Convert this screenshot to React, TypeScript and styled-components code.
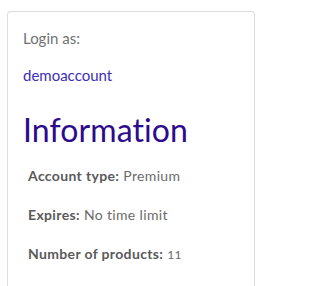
import styled, { createGlobalStyle } from "styled-components";

const GlobalStyle = createGlobalStyle`
  html, body {
    margin: 0;
    height: 100%;
    overflow: hidden;
    background: #fff;
    font-family: "Lato", "Open Sans", Arial, sans-serif;
  }
`;

const Page = styled.div`
  padding: 11px 0 0 7px;
  height: 100vh;
  box-sizing: border-box;
`;

const Card = styled.section`
  width: 248px;
  height: 100%;
  border: 1px solid #dcdcdc;
  border-bottom: none;
  border-radius: 4px 4px 0 0;
  padding: 15px 15px 0;
  box-sizing: border-box;
`;

const Label = styled.p`
  margin: 0 0 15px;
  font-size: 15px;
  line-height: 22px;
  color: #727272;
  font-weight: 400;
`;

const AccountLink = styled.a`
  display: block;
  font-size: 15px;
  line-height: 22px;
  color: #3a2fb8;
  text-decoration: none;
`;

const Heading = styled.h2`
  margin: 26px 0 19px;
  font-size: 32px;
  line-height: 35px;
  font-weight: 400;
  color: #2d0b8c;
  letter-spacing: 0.1px;
`;

const InfoList = styled.ul`
  list-style: none;
  margin: 0;
  padding: 0 0 0 5px;
  display: flex;
  flex-direction: column;
  gap: 19px;
`;

const InfoRow = styled.li`
  font-size: 14px;
  line-height: 20px;
  color: #6b6b6b;
  letter-spacing: 0.35px;
`;

const Key = styled.strong`
  font-weight: 700;
  color: #5a5a5a;
`;

const Value = styled.span<{ $small?: boolean }>`
  font-size: ${(p) => (p.$small ? "12px" : "14px")};
`;

const info = [
  { key: "Account type", value: "Premium" },
  { key: "Expires", value: "No time limit" },
  { key: "Number of products", value: "11", small: true },
];

export default function App() {
  return (
    <>
      <GlobalStyle />
      <Page>
        <Card>
          <Label>Login as:</Label>
          <AccountLink href="#">demoaccount</AccountLink>
          <Heading>Information</Heading>
          <InfoList>
            {info.map((row) => (
              <InfoRow key={row.key}>
                <Key>{row.key}:</Key> <Value $small={row.small}>{row.value}</Value>
              </InfoRow>
            ))}
          </InfoList>
        </Card>
      </Page>
    </>
  );
}
